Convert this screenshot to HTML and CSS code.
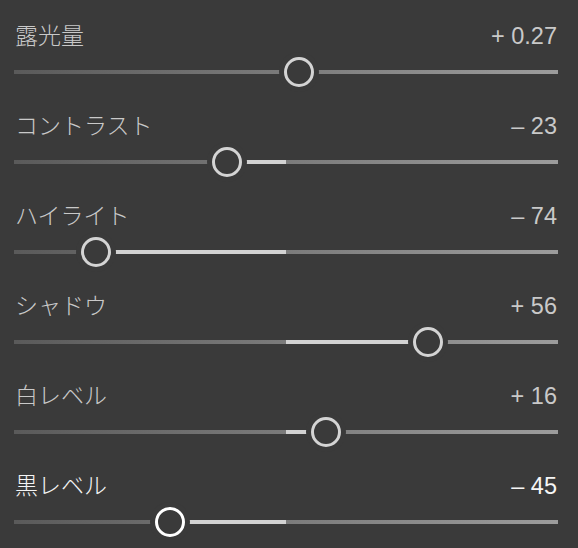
FILE: index.html
```html
<!DOCTYPE html>
<html lang="ja">
<head>
    <meta charset="UTF-8">
    <title>基本補正</title>
    <link rel="stylesheet" href="styles.css">
</head>
<body>
    <div class="panel">
        <div class="row">
            <div class="head"><span class="label">露光量</span><span class="value">+ 0.27</span></div>
            <div class="slider">
                <div class="track"></div>
                <div class="fill" style="left: 50%; right: 47.6%"></div>
                <div class="thumb" style="left: 52.4%"></div>
            </div>
        </div>
        <div class="row">
            <div class="head"><span class="label">コントラスト</span><span class="value">– 23</span></div>
            <div class="slider">
                <div class="track"></div>
                <div class="fill" style="left: 39.15%; right: 50%"></div>
                <div class="thumb" style="left: 39.15%"></div>
            </div>
        </div>
        <div class="row">
            <div class="head"><span class="label">ハイライト</span><span class="value">– 74</span></div>
            <div class="slider">
                <div class="track"></div>
                <div class="fill" style="left: 15.07%; right: 50%"></div>
                <div class="thumb" style="left: 15.07%"></div>
            </div>
        </div>
        <div class="row">
            <div class="head"><span class="label">シャドウ</span><span class="value">+ 56</span></div>
            <div class="slider">
                <div class="track"></div>
                <div class="fill" style="left: 50%; right: 23.9%"></div>
                <div class="thumb" style="left: 76.1%"></div>
            </div>
        </div>
        <div class="row">
            <div class="head"><span class="label">白レベル</span><span class="value">+ 16</span></div>
            <div class="slider">
                <div class="track"></div>
                <div class="fill" style="left: 50%; right: 42.65%"></div>
                <div class="thumb" style="left: 57.35%"></div>
            </div>
        </div>
        <div class="row active">
            <div class="head"><span class="label">黒レベル</span><span class="value">– 45</span></div>
            <div class="slider">
                <div class="track"></div>
                <div class="fill" style="left: 28.68%; right: 50%"></div>
                <div class="thumb" style="left: 28.68%"></div>
            </div>
        </div>
    </div>
</body>
</html>
```

FILE: styles.css
```css
body {
    margin: 0;
    background-color: #3a3a3a;
    font-family: 'Liberation Sans', 'Noto Sans CJK JP', sans-serif;
    color: #c9c9c9;
}
.panel {
    padding: 0 20px 0 14px;
}
.row {
    height: 90px;
    padding-top: 21px;
    box-sizing: border-box;
}
.head {
    display: flex;
    justify-content: space-between;
    align-items: center;
    height: 30px;
    font-size: 23px;
    line-height: 30px;
    padding: 0 1px 0 1px;
}
.label {
    font-family: 'Noto Sans CJK JP', sans-serif;
    font-weight: 300;
    margin-bottom: 4px;
}
.value {
    font-size: 23.5px;
}
.active .head {
    color: #f5f5f5;
}
/* スライダー */
.slider {
    position: relative;
    height: 30px;
    margin-top: 6px;
}
.track {
    position: absolute;
    left: 0;
    right: 0;
    top: 13px;
    height: 4px;
    background: linear-gradient(to right, #5a5a5a, #7b7b7b 50%, #9c9c9c);
}
.fill {
    position: absolute;
    top: 13px;
    height: 4px;
    background-color: #d2d2d2;
}
.thumb {
    position: absolute;
    top: 0;
    width: 30px;
    height: 30px;
    margin-left: -15px;
    box-sizing: border-box;
    border: 3px solid #d4d4d4;
    border-radius: 50%;
    background-color: #3a3a3a;
    box-shadow: 0 0 0 5px #3a3a3a;
}
.active .thumb {
    border-color: #ffffff;
}
```
